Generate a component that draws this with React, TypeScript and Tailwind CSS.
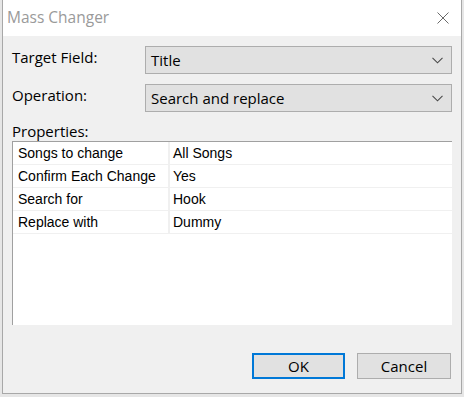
import React from "react"

const rows = [
  ["Songs to change", "All Songs"],
  ["Confirm Each Change", "Yes"],
  ["Search for", "Hook"],
  ["Replace with", "Dummy"],
]

function Chevron() {
  return (
    <svg width="11" height="7" viewBox="0 0 11 7" className="shrink-0">
      <polyline points="0.5,0.8 5.5,5.8 10.5,0.8" fill="none" stroke="#4a4a4a" strokeWidth="1.1" />
    </svg>
  )
}

function Combo({ value }: { value: string }) {
  return (
    <div className="flex-1 h-[28px] bg-[#e1e1e1] border border-[#adadad] flex items-center pl-[5px] pr-[8px]">
      <span className="flex-1 text-[15px] text-black leading-none">{value}</span>
      <Chevron />
    </div>
  )
}

export default function App() {
  return (
    <div className="w-[464px] h-[397px] bg-[#e6e6e6] overflow-hidden" style={{ fontFamily: '"Open Sans", "Noto Sans", sans-serif' }}>
      <div className="ml-[2px] w-[460px] h-[394px] border border-[#a8a8a8] border-t-0 bg-[#f0f0f0] flex flex-col">
        <div className="h-[36px] bg-white flex items-center pl-[4px] pr-[12px]">
          <span className="flex-1 text-[15.5px] text-[#9a9a9a]">Mass Changer</span>
          <svg width="12" height="12" viewBox="0 0 12 12">
            <path d="M0.5 0.5 L11.5 11.5 M11.5 0.5 L0.5 11.5" stroke="#6a6a6a" strokeWidth="1" fill="none" />
          </svg>
        </div>

        <div className="flex flex-col pl-[9px] pr-[9px] pt-[10px]">
          <div className="flex items-center">
            <span className="w-[133px] text-[15px] text-black -mt-[6px]">Target Field:</span>
            <Combo value="Title" />
          </div>
          <div className="flex items-center mt-[10px]">
            <span className="w-[133px] text-[15px] text-black -mt-[6px]">Operation:</span>
            <Combo value="Search and replace" />
          </div>

          <div className="h-[20px] mt-[9px] text-[15px] leading-[20px] text-black">Properties:</div>

          <div
            className="h-[184px] bg-white border-t border-l border-[#a0a0a0] text-[14px] text-black"
            style={{ fontFamily: '"Liberation Sans", Arial, sans-serif' }}
          >
            {rows.map(([k, v]) => (
              <div key={k} className="flex h-[23px] border-b border-[#f0f0f0]">
                <div className="w-[157px] pl-[5px] flex items-center border-r-2 border-[#f0f0f0]">{k}</div>
                <div className="flex-1 pl-[3px] flex items-center">{v}</div>
              </div>
            ))}
          </div>

          <div className="flex justify-end gap-[12px] mt-[28px] pr-[1px]">
            <button className="w-[93px] h-[26px] bg-[#e1e1e1] border-2 border-[#0078d7] text-[15px] text-black leading-none">OK</button>
            <button className="w-[94px] h-[26px] bg-[#e1e1e1] border border-[#adadad] text-[15px] text-black leading-none">Cancel</button>
          </div>
        </div>
      </div>
    </div>
  )
}
